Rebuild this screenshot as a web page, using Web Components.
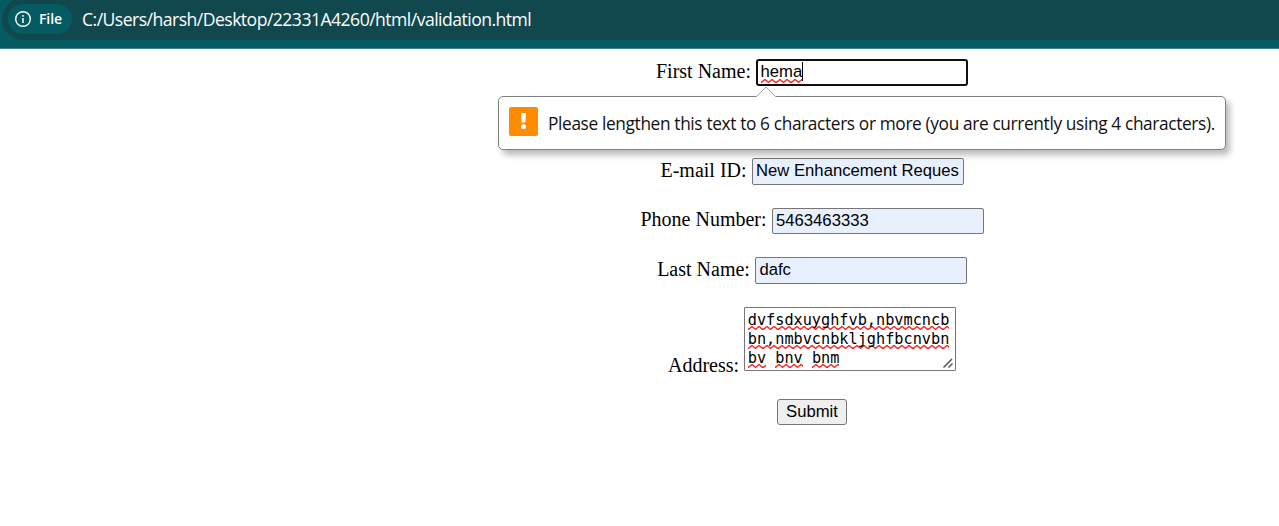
<!DOCTYPE html>
<html lang="en">
<head>
<meta charset="utf-8">
<title>validation.html</title>
<style>
body{margin:0;background:#fff;color:#000;font-family:"Liberation Serif",serif;overflow:hidden}
</style>
</head>
<body>
<validation-page></validation-page>
<script>
const define = (name, html) => customElements.define(name, class extends HTMLElement {
  constructor() {
    super();
    const t = document.createElement('template');
    t.innerHTML = html;
    this.attachShadow({mode: 'open'}).append(t.content.cloneNode(true));
  }
});

define('spell-mark', `<style>
:host{display:inline-block;height:19px;line-height:19px;white-space:pre;
background:url("data:image/svg+xml,%3Csvg xmlns='http://www.w3.org/2000/svg' width='7.5' height='4' viewBox='0 0 7.5 4'%3E%3Cpath d='M-1.9 .6L0 3.3Q.3 3.5 .6 3.3L3.4 .7Q3.75 .5 4.1 .7L6.9 3.3Q7.2 3.5 7.5 3.3L9.4 .7' fill='none' stroke='%23f22' stroke-width='1.4'/%3E%3C/svg%3E") repeat-x 0 100%}
</style><slot></slot>`);

define('address-bar', `<style>
:host{display:block;box-sizing:border-box;height:49px;background:#055b61;border-bottom:1px solid #3d7d83;padding-left:2px;overflow:hidden}
.box{box-sizing:border-box;display:flex;align-items:center;width:1320px;height:42px;margin-top:-2px;padding:2px 0 2px 6px;border-radius:21px;background:#10484e;color:#fff}
.chip{box-sizing:border-box;display:flex;align-items:center;width:64px;height:30px;border-radius:15px;background:#055b61;padding-left:7px}
svg{flex:none;width:16px;height:16px}
.file{font:600 14px/20px "Open Sans",sans-serif;margin-left:8px;letter-spacing:-.1px}
.url{font:17.6px/24px "Open Sans",sans-serif;margin-left:10px;white-space:nowrap;letter-spacing:-.53px}
</style>
<div class="box"><div class="chip">
<svg viewBox="0 0 16 16"><circle cx="8" cy="8" r="7.3" fill="none" stroke="#fff" stroke-width="1.4"/><path d="M8 7v5M8 4v1.7" stroke="#fff" stroke-width="1.5"/></svg>
<span class="file">File</span></div><span class="url">C:/Users/harsh/Desktop/22331A4260/html/validation.html</span></div>`);

define('form-row', `<style>
:host{display:flex;justify-content:center;align-items:flex-start;gap:5px;height:49.5px;font-size:20px;line-height:23px}
:host([tall]){height:92px}
.label{white-space:nowrap;padding-top:1px}
:host([snug]) .label{padding-top:0}
:host([tall]) .label{padding-top:47px}
</style><span class="label"><slot name="label"></slot></span><slot></slot>`);

define('text-field', `<style>
:host{box-sizing:border-box;display:flex;width:212px;height:27px;border:1px solid #767676;border-radius:2px;background:#e8f0fe;padding:2px 3px 0 3.5px;font:16.67px/19px "Liberation Sans",sans-serif;white-space:pre;overflow:hidden}
:host([focused]){background:#fff;border:2px solid #101010;border-radius:3px;padding:1px 2.5px 0}
:host([short]){height:26px}
.text{height:20px}
.caret{display:none;width:1px;height:19px;background:#000}
:host([focused]) .caret{display:block}
:host([focused]) ::slotted(spell-mark){height:21px}
</style><slot></slot><i class="caret"></i>`);

define('text-box', `<style>
:host{box-sizing:border-box;position:relative;display:block;width:212px;height:64px;border:1px solid #767676;border-radius:1px;background:#fff;padding:3px 0 0 2.7px;font:15.22px/19px "DejaVu Sans Mono",monospace;white-space:nowrap;overflow:hidden}
svg{position:absolute;right:1px;bottom:1px;width:12px;height:12px}
</style><slot></slot><svg viewBox="0 0 12 12"><path d="M1.5 10.5L10 2M6.5 10.5l4-4" fill="none" stroke="#555" stroke-width="1.5"/></svg>`);

define('submit-button', `<style>
:host{box-sizing:border-box;display:block;width:70px;height:26px;border:1px solid #767676;border-radius:3px;background:#efefef;font:16.67px/23px "Liberation Sans",sans-serif;text-align:center}
</style><slot></slot>`);

define('validation-bubble', `<style>
:host{box-sizing:border-box;position:absolute;left:498px;top:96px;width:728px;height:54px;display:flex;align-items:flex-start;border:1px solid #808080;border-radius:5px;background:#fff;box-shadow:4px 5px 6px rgba(0,0,0,.27);padding:10px 0 0 10px}
.arrow{position:absolute;left:256px;top:-11px;width:22px;height:12px}
.icon{flex:none;width:29px;height:29px}
.text{font:17.3px/24px "Open Sans",sans-serif;color:#111;margin:5px 0 0 10px;white-space:nowrap;letter-spacing:-.36px}
</style>
<svg class="arrow" viewBox="0 0 22 12"><path d="M1 12V11L11 1L21 11V12Z" fill="#fff"/><path d="M1 11L11 1L21 11" fill="none" stroke="#aaa"/></svg>
<svg class="icon" viewBox="0 0 29 29"><rect width="29" height="29" rx="2" fill="#ff8c00"/><path d="M12 6h5l-.6 9.5h-3.8z" fill="#fff"/><circle cx="14.5" cy="19.8" r="2.5" fill="#fff"/></svg>
<span class="text"><slot></slot></span>`);

define('validation-page', `<style>
:host{display:block;height:526px;position:relative}
main{padding:10px 0 0 345px}
.actions{display:flex;justify-content:center}
</style>
<address-bar></address-bar>
<main>
<form-row><span slot="label">First Name:</span><text-field focused><spell-mark>hema</spell-mark></text-field></form-row>
<form-row></form-row>
<form-row><span slot="label">E-mail ID:</span><text-field>New Enhancement Reques</text-field></form-row>
<form-row snug><span slot="label">Phone Number:</span><text-field short>5463463333</text-field></form-row>
<form-row><span slot="label">Last Name:</span><text-field>dafc</text-field></form-row>
<form-row tall><span slot="label">Address:</span><text-box><spell-mark>dvfsdxuyghfvb,nbvmcncb</spell-mark><br><spell-mark>bn,nmbvcnbkljghfbcnvbn</spell-mark><br><spell-mark>bv</spell-mark> <spell-mark>bnv</spell-mark> <spell-mark>bnm</spell-mark></text-box></form-row>
<div class="actions"><submit-button>Submit</submit-button></div>
</main>
<validation-bubble>Please lengthen this text to 6 characters or more (you are currently using 4 characters).</validation-bubble>`);
</script>
</body>
</html>
